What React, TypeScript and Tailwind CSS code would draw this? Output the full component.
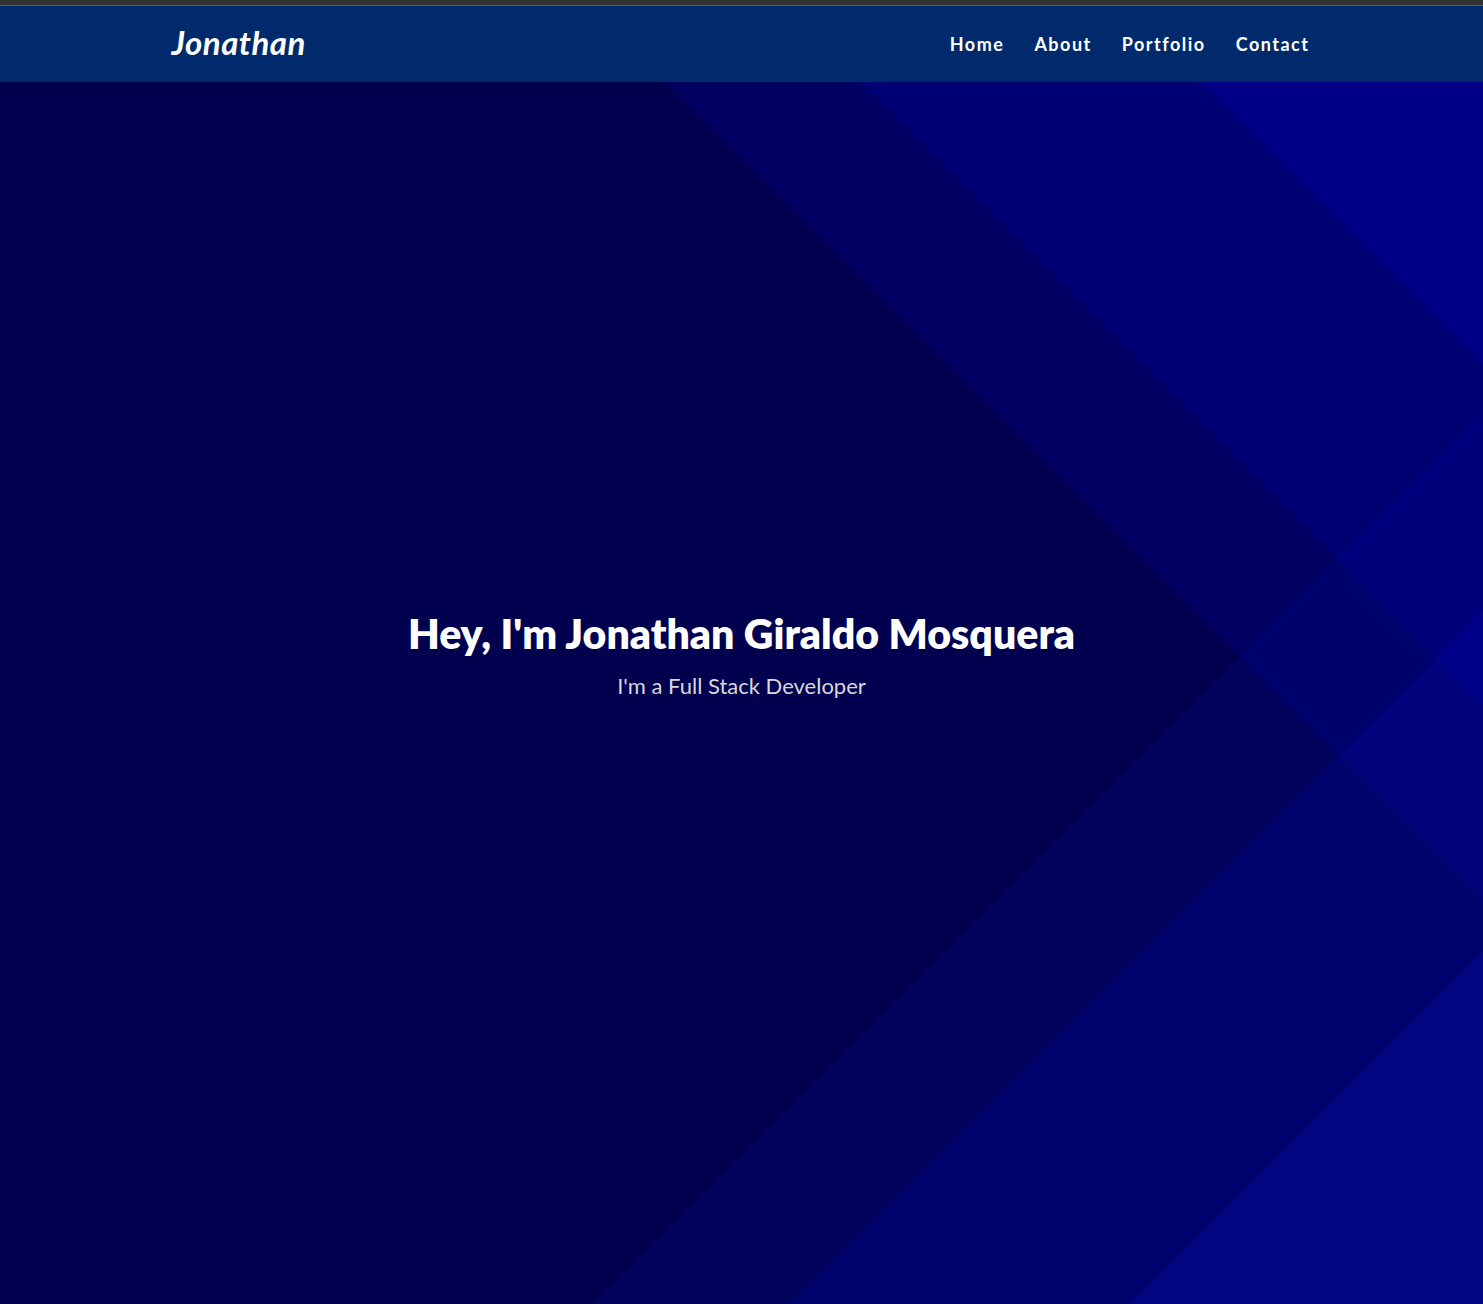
import React from "react";

const links = ["Home", "About", "Portfolio", "Contact"];

function Stripes() {
  // hero background: two families of 45deg bands layered over the navy base
  const down = [
    { pts: "665,0 1483,0 1483,818", o: 0.1 },
    { pts: "860,0 1483,0 1483,623", o: 0.12 },
    { pts: "1200,0 1483,0 1483,283", o: 0.15 },
  ];
  const up = [
    { pts: "592,1222 1483,331 1483,1222", o: 0.07 },
    { pts: "790,1222 1483,529 1483,1222", o: 0.1 },
    { pts: "1130,1222 1483,869 1483,1222", o: 0.14 },
  ];
  return (
    <svg
      className="absolute inset-0 w-full h-full"
      viewBox="0 0 1483 1222"
      preserveAspectRatio="none"
    >
      <rect width="1483" height="1222" fill="#00004f" />
      {down.map((d, i) => (
        <polygon key={i} points={d.pts} fill="#0000ff" fillOpacity={d.o} />
      ))}
      {up.map((d, i) => (
        <polygon key={i} points={d.pts} fill="#0418ff" fillOpacity={d.o} />
      ))}
    </svg>
  );
}

export default function App() {
  return (
    <div className="min-h-screen flex flex-col bg-[#00004f] font-['Lato',sans-serif]">
      {/* window strip */}
      <div className="h-[6px] bg-[#333333] border-b border-[#5a5a5a]" />

      {/* Navbar */}
      <nav className="h-[76px] bg-[#002a6b]">
        <div className="w-[1140px] mx-auto h-full flex items-center justify-between">
          <a className="text-white text-[33px] font-bold italic tracking-[0.5px] pb-[2px]">
            Jonathan
          </a>
          <ul className="flex items-center gap-[30px] pr-[2px]">
            {links.map((l) => (
              <li key={l} className="text-white text-[18px] font-bold tracking-[1.5px]">
                {l}
              </li>
            ))}
          </ul>
        </div>
      </nav>

      {/* Hero */}
      <section className="relative h-[1222px] overflow-hidden">
        <Stripes />
        <div className="relative h-full flex flex-col items-center justify-center pb-[76px]">
          <h1 className="text-white text-[41px] font-extrabold leading-tight">
            Hey, I'm Jonathan Giraldo Mosquera
          </h1>
          <p className="text-[#d8d8dc] text-[22px] mt-[10px]">I'm a Full Stack Developer</p>
        </div>
      </section>
    </div>
  );
}
